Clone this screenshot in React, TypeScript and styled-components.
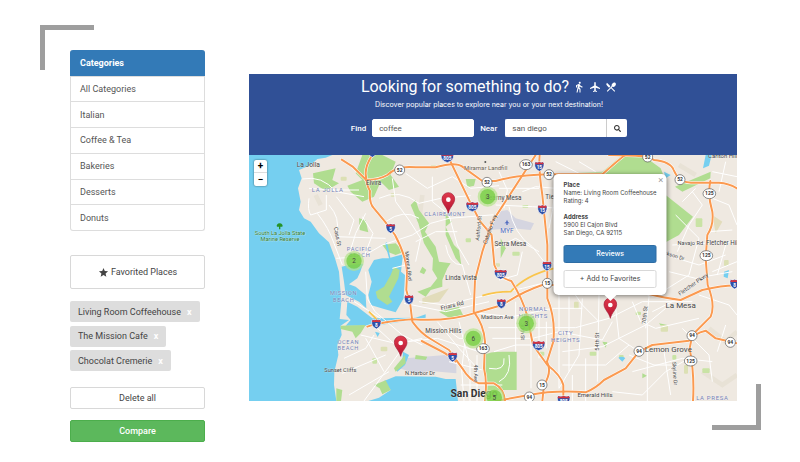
import React from "react";
import styled, { createGlobalStyle } from "styled-components";
import { MdDirectionsWalk, MdLocalAirport, MdLocalDining, MdStar } from "react-icons/md";
import { FaSearch } from "react-icons/fa";

const GlobalStyle = createGlobalStyle`
  *, *::before, *::after { box-sizing: border-box; }
  body { margin: 0; background: #fff; color: #444; font-family: Roboto, "Liberation Sans", sans-serif; font-size: 9px; }
  button, input { font: inherit; color: inherit; margin: 0; }
  h1, h2, p { margin: 0; }
`;

/* ---------- page frame ---------- */

const Frame = styled.div`
  position: relative;
  display: flex;
  align-items: flex-start;
  gap: 44px;
  margin: 25px 39px 20px 40px;
  padding: 25px 24px 0 30px;
`;

const Corner = styled.span<{ $end?: boolean }>`
  position: absolute;
  width: 54px;
  height: 45px;
  border: 0 solid #9e9e9e;
  ${(p) =>
    p.$end
      ? "right: 0; bottom: 12px; width: 49px; height: 46px; border-width: 0 5px 5px 0;"
      : "left: 0; top: 0; border-width: 5px 0 0 5px;"}
`;

const Sidebar = styled.aside`
  flex: 0 0 135px;
  display: flex;
  flex-direction: column;
`;

const Main = styled.main`
  flex: 1;
  min-width: 0;
  margin-top: 24px;
`;

/* ---------- sidebar ---------- */

const Categories = styled.nav`
  display: grid;
  grid-auto-rows: 1fr;
  min-height: 181px;
  margin-bottom: 24px;
  border: 1px solid #ddd;
  border-top: 0;
  border-radius: 3px;
`;

const CategoriesTitle = styled.h2`
  display: flex;
  align-items: center;
  margin: 0 -1px;
  padding: 0 10px;
  border-radius: 3px 3px 0 0;
  background: #337ab7;
  color: #fff;
  font-size: 9px;
  font-weight: 700;
`;

const Category = styled.a`
  display: flex;
  align-items: center;
  padding: 0 9px;
  border-top: 1px solid #ddd;
  color: #555;
  text-decoration: none;
`;

const SideButton = styled.button<{ $tone?: "green"; $tall?: boolean }>`
  display: flex;
  align-items: center;
  justify-content: center;
  gap: 2px;
  height: ${(p) => (p.$tall ? 34 : 22)}px;
  padding: 0;
  border: 1px solid ${(p) => (p.$tone ? "#4cae4c" : "#d8d8d8")};
  border-radius: 2px;
  background: ${(p) => (p.$tone ? "#5cb85c" : "#fff")};
  color: ${(p) => (p.$tone ? "#fff" : "#444")};
  font-weight: ${(p) => (p.$tone ? 500 : 400)};
`;

const Chips = styled.ul`
  display: flex;
  flex-direction: column;
  align-items: flex-start;
  justify-content: space-between;
  min-height: 70px;
  margin: 12px 0 16px;
  padding: 0;
  list-style: none;
`;

const Chip = styled.li`
  display: flex;
  align-items: center;
  height: 21px;
  padding: 0 8px;
  gap: 6px;
  border-radius: 2px;
  background: #ddd;
  color: #444;
`;

const ChipClose = styled.button`
  padding: 0;
  border: 0;
  background: none;
  color: #fff;
  font-weight: 700;
`;

const Actions = styled.div`
  display: grid;
  gap: 11px;
`;

/* ---------- banner ---------- */

const Banner = styled.header`
  display: flex;
  flex-direction: column;
  align-items: center;
  min-height: 81px;
  padding: 3px 8px 0 0;
  background: #305096;
  color: #fff;
`;

const Title = styled.h1`
  display: flex;
  align-items: center;
  gap: 4px;
  font-size: 16px;
  font-weight: 400;
  line-height: 20px;
`;

const Tagline = styled.p`
  margin-top: 3px;
  font-family: Inter, Roboto, sans-serif;
  font-size: 7px;
  line-height: 10px;
`;

const SearchForm = styled.form`
  display: flex;
  align-items: center;
  margin-top: 9px;
`;

const Label = styled.label`
  margin-right: 6px;
  font-size: 8px;
  font-weight: 500;
`;

const Field = styled.input<{ $joined?: boolean }>`
  width: 102px;
  height: 18px;
  padding: 0 6px;
  border: 1px solid #fff;
  border-right-color: ${(p) => (p.$joined ? "#ccc" : "#fff")};
  border-radius: ${(p) => (p.$joined ? "2px 0 0 2px" : "2px")};
  background: #fff;
  color: #555;
  font-size: 8px;
  margin-left: ${(p) => (p.$joined ? 2 : 0)}px;
  margin-right: ${(p) => (p.$joined ? 0 : 6)}px;
`;

const SearchButton = styled.button`
  display: grid;
  place-items: center;
  width: 20px;
  height: 18px;
  padding: 0;
  border: 0;
  border-radius: 0 2px 2px 0;
  background: #fff;
  color: #333;
`;

/* ---------- map ---------- */

const MapArea = styled.section`
  position: relative;
  overflow: hidden;
`;

const MapDrawing = styled.svg`
  display: block;
  width: 100%;
  height: auto;
  font-family: Roboto, "Liberation Sans", sans-serif;
`;

const MapText = styled.text<{ $size?: number; $fill?: string; $wide?: boolean; $bold?: boolean }>`
  font-size: ${(p) => p.$size ?? 20}px;
  font-weight: ${(p) => (p.$bold ? 700 : 400)};
  fill: ${(p) => p.$fill ?? "#444"};
  letter-spacing: ${(p) => (p.$wide ? 2 : 0)}px;
  text-anchor: middle;
  paint-order: stroke;
  stroke: rgba(255, 255, 255, 0.5);
  stroke-width: 2px;
`;

const ZoomControl = styled.div`
  position: absolute;
  left: 5px;
  top: 5px;
  display: grid;
  border-radius: 2px;
  background: #fff;
  box-shadow: 0 0 2px rgba(0, 0, 0, 0.6);
`;

const ZoomButton = styled.button`
  width: 13px;
  height: 13px;
  padding: 0;
  border: 0;
  border-bottom: 1px solid #ddd;
  background: none;
  color: #000;
  font-size: 10px;
  font-weight: 700;
  line-height: 12px;
  &:last-child { border-bottom: 0; }
`;

const Popup = styled.article`
  position: absolute;
  left: 74%;
  bottom: 43%;
  transform: translateX(-50%);
  width: 113px;
  padding: 7px 10px;
  border-radius: 5px;
  background: #fff;
  color: #444;
  box-shadow: 0 1px 5px rgba(0, 0, 0, 0.5);
  font-family: Inter, "Liberation Sans", sans-serif;
  font-size: 6px;
  line-height: 8px;
  white-space: nowrap;
  &::after {
    content: "";
    position: absolute;
    left: 50%;
    top: 100%;
    margin-left: -6px;
    border: 6px solid transparent;
    border-top-color: #fff;
    border-bottom: 0;
  }
`;

const PopupClose = styled.button`
  position: absolute;
  right: 3px;
  top: 1px;
  padding: 0;
  border: 0;
  background: none;
  color: #999;
  font-size: 9px;
  line-height: 9px;
`;

const Paragraph = styled.p`
  margin-bottom: 8px;
`;

const PopupButton = styled.button<{ $primary?: boolean }>`
  display: block;
  width: 100%;
  height: 18px;
  margin-bottom: ${(p) => (p.$primary ? 7 : 0)}px;
  padding: 0;
  border: 1px solid ${(p) => (p.$primary ? "#2e6da4" : "#d8d8d8")};
  border-radius: 2px;
  background: ${(p) => (p.$primary ? "#337ab7" : "#fff")};
  color: ${(p) => (p.$primary ? "#fff" : "#444")};
  font-size: 7px;
  font-weight: ${(p) => (p.$primary ? 500 : 400)};
`;

const categories = ["All Categories", "Italian", "Coffee & Tea", "Bakeries", "Desserts", "Donuts"];
const favorites = ["Living Room Coffeehouse", "The Mission Cafe", "Chocolat Cremerie"];

const BLUE = "#7180b5";
const GREEN = "#2c7a2a";

type LabelSpec = { t: string; x: number; y: number; s?: number; f?: string; w?: boolean; b?: boolean; r?: number };

const labels: LabelSpec[] = [
  { t: "La Jolla", x: 178, y: 37 },
  { t: "LA JOLLA", x: 236, y: 110, s: 18, f: BLUE, w: true },
  { t: "Elvira", x: 374, y: 91, s: 19 },
  { t: "South La Jolla State", x: 93, y: 240, s: 17, f: GREEN },
  { t: "Marine Reserve", x: 93, y: 259, s: 17, f: GREEN },
  { t: "Cass St", x: 260, y: 246, s: 17, r: 78 },
  { t: "PACIFIC", x: 331, y: 288, s: 17, f: BLUE, w: true },
  { t: "BEACH", x: 332, y: 307, s: 17, f: BLUE, w: true },
  { t: "MISSION", x: 284, y: 421, s: 17, f: BLUE, w: true },
  { t: "BEACH", x: 284, y: 441, s: 17, f: BLUE, w: true },
  { t: "OCEAN", x: 298, y: 567, s: 17, f: BLUE, w: true },
  { t: "BEACH", x: 298, y: 586, s: 17, f: BLUE, w: true },
  { t: "Sunset Cliffs", x: 274, y: 652, s: 17 },
  { t: "N.Harbor Dr", x: 513, y: 659, s: 17 },
  { t: "Morena Blvd", x: 473, y: 334, s: 16, r: 84 },
  { t: "CLAIREMONT", x: 588, y: 183, s: 17, f: BLUE, w: true },
  { t: "Linda Vista", x: 636, y: 374, s: 19 },
  { t: "Friars Rd", x: 611, y: 457, s: 18, r: -14 },
  { t: "Mission Hills", x: 583, y: 534, s: 19 },
  { t: "4th Ave", x: 675, y: 655, s: 16, r: 90 },
  { t: "San Diego", x: 675, y: 725, s: 31, f: "#333", b: true },
  { t: "Miramar Landfill", x: 710, y: 45, s: 18, f: "#6b6252" },
  { t: "Kearny Mesa", x: 763, y: 135, s: 19 },
  { t: "Tierrasanta", x: 937, y: 132, s: 19 },
  { t: "Ashford St", x: 694, y: 220, s: 16, r: -84 },
  { t: "Cabrillo Fwy", x: 728, y: 225, s: 17, r: -70 },
  { t: "MYF", x: 774, y: 234, s: 20, f: "#526cc0" },
  { t: "Serra Mesa", x: 784, y: 272, s: 19 },
  { t: "Madison Ave", x: 745, y: 492, s: 17 },
  { t: "NORMAL", x: 853, y: 469, s: 18, f: BLUE, w: true },
  { t: "HEIGHTS", x: 853, y: 488, s: 18, f: BLUE, w: true },
  { t: "30th St", x: 815, y: 530, s: 16, r: 88 },
  { t: "CITY", x: 950, y: 541, s: 18, f: BLUE, w: true },
  { t: "HEIGHTS", x: 950, y: 560, s: 18, f: BLUE, w: true },
  { t: "54th St", x: 1050, y: 560, s: 17, r: -90 },
  { t: "70th St", x: 1193, y: 481, s: 17, r: -84 },
  { t: "Emerald Hills", x: 1038, y: 725, s: 18 },
  { t: "Lemon Grove", x: 1258, y: 591, s: 24 },
  { t: "La Mesa", x: 1295, y: 458, s: 24 },
  { t: "Skyline Dr", x: 1272, y: 656, s: 16, r: 86 },
  { t: "LA PRESA", x: 1390, y: 736, s: 18, f: BLUE, w: true },
  { t: "Navajo Rd", x: 1324, y: 269, s: 17 },
  { t: "Fletcher Hills", x: 1426, y: 269, s: 19 },
  { t: "Jackson Dr", x: 1266, y: 305, s: 16, r: 17 },
  { t: "Fletcher Pkwy", x: 1336, y: 392, s: 17, r: -35 },
  { t: "Carlton Hills", x: 1426, y: 8, s: 18 },
];

const freeways = [
  "M278 14 L310 34 L352 75",
  "M370 0 Q350 30 350 55 Q352 90 363 108 Q360 145 375 160 L408 200 L438 240 Q475 310 474 360 L472 405 L484 450 L490 500 Q515 535 545 552 L600 585 L640 640 Q660 675 690 685 H735 Q765 700 768 738",
  "M350 75 Q390 75 415 60 Q445 30 500 37 H560 Q620 20 640 35 L700 78 H740 Q800 60 900 58 H1060 Q1125 0 1130 0",
  "M1080 0 L1160 2 Q1200 3 1215 15 Q1265 20 1274 45 Q1290 85 1330 83 H1410 Q1440 85 1464 100",
  "M595 0 L665 145 L694 200 L728 240 L736 330 Q750 370 787 378 Q820 430 834 480 L852 570 L895 630 Q935 660 943 690 V738",
  "M860 0 L730 200 L700 290 L678 375 L674 470 Q705 510 708 560 L705 640 Q715 680 708 738",
  "M872 0 Q868 40 880 120 L895 270 L895 430 Q920 490 913 560 L894 620 Q910 650 885 690 L880 738",
  "M355 515 Q400 500 490 493 Q600 500 674 475 L760 450 Q820 410 880 390 H940 M1190 415 Q1250 430 1295 435 L1360 405 Q1430 390 1464 392",
  "M518 558 L570 585 Q600 600 620 620",
  "M740 738 L840 720 Q920 705 1010 712 Q1040 700 1065 675 L1130 640 L1170 590 L1210 570 L1320 557 Q1335 535 1370 527 L1400 550 L1464 565",
  "M1384 78 Q1375 120 1390 170 Q1395 210 1375 240 L1370 310 L1376 390 Q1400 450 1385 485 L1330 540 L1322 580 Q1337 660 1332 738",
];

const streets =
  "M160 72 Q220 60 260 110 L345 125 M180 100 L250 105 H330 M180 130 Q175 165 185 180 L232 165 V120 M205 175 Q240 220 255 265 L280 330 M240 150 Q275 190 262 230 M262 125 L315 195 L300 240 M262 310 L340 305 L400 270 L490 240 L545 205 L600 190 L750 178 M350 175 L320 235 L300 300 M340 185 L372 235 L345 305 M260 245 L410 250 M390 130 Q450 100 510 145 L575 130 L665 122 M430 70 L440 140 L480 195 L515 250 L500 320 M410 200 Q465 160 510 190 M470 55 L535 100 L610 65 L665 100 L750 92 M550 65 V140 L600 180 L625 270 L660 330 M500 260 L560 230 L625 230 M590 270 Q600 330 640 330 L665 420 M430 340 L470 330 M510 440 L590 450 L670 430 L820 400 L960 365 M465 445 L590 470 L720 440 M565 500 L630 580 L690 645 M350 350 L355 430 L378 470 L460 540 L520 570 M300 430 L395 490 M374 510 L455 585 M335 540 L460 570 M350 550 L405 650 M285 610 L350 580 L375 540 M280 655 L410 600 M300 720 L420 650 M345 738 L475 560 L520 550 M475 560 L565 550 L690 590 M590 520 L630 550 H700 M630 500 L660 620 M600 620 L700 645 M650 540 L638 645 L645 738 M663 620 V738 M684 600 V738 M635 690 H760 M635 715 H760 M740 150 L850 155 L940 160 M750 100 H870 M750 50 L775 105 L765 160 M820 110 L860 95 L920 100 M780 155 Q795 240 850 275 L885 320 M740 280 L800 250 L870 290 M820 290 L805 360 L750 375 M920 90 L910 170 L900 220 M910 320 L1000 450 L1050 500 M718 518 H980 L1080 490 L1180 440 H1330 M730 550 H850 L930 530 L1060 555 L1090 500 M690 475 L790 485 L910 460 L1000 460 M800 440 V590 M846 500 V700 M870 480 V610 M892 500 V580 M930 410 V700 M960 425 V650 M1000 430 L990 600 L930 700 M1050 420 L1045 680 M735 590 L800 570 H890 M720 640 Q770 650 765 610 M780 600 Q790 660 750 680 M940 590 L1060 575 L1190 510 L1250 460 M940 630 H1070 L1140 570 M970 660 V738 M1010 610 V738 M1100 460 L1110 550 L1170 590 M1150 440 L1175 500 L1220 520 L1350 490 M1205 380 L1190 520 M1210 470 L1290 430 M1195 510 V738 M1150 650 L1300 610 L1390 620 M1090 710 L1180 720 L1250 650 L1320 610 M1245 590 L1265 720 M1140 600 L1215 630 H1280 M1300 520 L1380 600 L1390 680 M1430 510 L1405 590 M1350 420 L1440 450 L1464 480 M1280 180 L1350 250 L1320 360 L1240 410 M1250 300 L1350 330 L1430 300 M1260 350 L1340 370 L1450 350 M1270 270 L1360 265 L1464 260 M1330 110 L1360 150 L1320 210 L1285 290 M1390 130 L1440 150 L1464 210 M1380 230 L1450 225 M1390 50 L1464 65 M1430 20 L1410 110 M1340 100 L1300 140 M1390 350 L1464 320 M1430 270 L1405 360 M990 20 L1040 50 M920 20 L1000 60";

const inlandGreens = [
  "M192 55 L260 40 L250 75 L270 85 L230 108 L195 85Z",
  "M340 0 H400 L440 20 L425 60 L450 95 L420 105 L395 80 L375 125 L340 140 L305 110 L295 92 L340 75 L320 55Z",
  "M330 190 L350 195 L358 232 L332 225Z",
  "M400 270 L440 265 L465 290 L440 300 L415 290Z",
  "M485 150 L500 135 L510 165 L540 205 L528 230 L560 275 L570 320 L605 325 L595 340 L580 375 L580 395 L545 405 L530 425 L505 410 L545 395 L565 370 L550 345 L552 310 L525 265 L508 205Z",
  "M590 175 L608 200 L590 215 L615 270 L630 285 L637 330 L620 310 L590 240Z",
  "M650 72 H680 L675 92 L655 97Z",
  "M570 470 L630 455 L642 480 L600 488Z",
  "M705 600 Q720 590 760 590 H803 V705 H710Z",
  "M960 55 L1060 50 L1120 0 H1180 L1235 40 L1245 65 L1205 90Z",
  "M1250 120 L1332 185 L1290 240 L1250 262Z",
  "M520 335 L532 345 L525 358 L512 352Z",
  "M1278 95 L1385 50 L1384 70 L1300 110Z",
  "M1230 505 L1255 510 L1245 525Z",
  "M1060 560 L1075 562 L1070 578Z",
  "M930 335 L945 350 L935 370Z",
  "M262 700 L280 705 L276 738 H262Z",
  "M755 250 L770 280 L755 310Z",
  "M1180 655 L1194 662 L1180 670Z",
];

const shoreGreens = [
  "M435 335 L452 345 L448 370 L420 425 L430 440 L415 450 L385 430 L380 410 L405 395 L425 360Z",
  "M275 512 L350 510 L335 535 L320 550 L310 530 L275 522Z",
  "M468 600 L470 625 L440 650 L435 640Z",
  "M500 600 L535 605 L530 615 L498 612Z",
  "M375 690 L410 676 L425 705 L400 718 L392 700Z",
];

const patches: [number, number, number, number][] = [
  [275, 65, 18, 12], [425, 115, 14, 10], [545, 30, 16, 12], [820, 150, 18, 8], [790, 290, 22, 12],
  [975, 440, 14, 22], [1022, 590, 20, 12], [1235, 510, 22, 20], [1340, 190, 20, 26], [1425, 315, 14, 18],
  [1305, 630, 12, 26], [395, 575, 20, 14], [370, 610, 14, 16], [650, 250, 16, 12], [735, 325, 18, 10],
  [1110, 600, 14, 10], [1270, 600, 12, 14], [870, 590, 16, 12], [1360, 640, 22, 14], [1160, 470, 16, 10],
];

function Shield({ x, y, n }: { x: number; y: number; n: string }) {
  const h = n.length > 2 ? 19 : 14;
  return (
    <g transform={`translate(${x} ${y})`}>
      <path
        d={`M${-h} -9 L${-h + 3} -14 Q${-h / 2} -10 0 -14 Q${h / 2} -10 ${h - 3} -14 L${h} -9 Q${h + 2} 8 0 15 Q${-h - 2} 8 ${-h} -9Z`}
        fill="#2f50a8"
        stroke="#fff"
        strokeWidth="2"
      />
      <path
        d={`M${-h + 1} -6 L${-h + 3} -13 Q${-h / 2} -9 0 -13 Q${h / 2} -9 ${h - 3} -13 L${h - 1} -6Z`}
        fill="#d8343f"
      />
      <text y="8" textAnchor="middle" fontSize="14" fontWeight="700" fill="#fff">{n}</text>
    </g>
  );
}

function Route({ x, y, n }: { x: number; y: number; n: string }) {
  return (
    <g transform={`translate(${x} ${y})`}>
      <ellipse rx={n.length > 2 ? 19 : 15} ry="15" fill="#fff" stroke="#555" strokeWidth="2" />
      <text y="5" textAnchor="middle" fontSize="15" fontWeight="700" fill="#333">{n}</text>
    </g>
  );
}

function Pin({ x, y }: { x: number; y: number }) {
  return (
    <g transform={`translate(${x} ${y})`}>
      <path d="M0 0 C-4 -18 -19 -27 -19 -42 A19 19 0 0 1 19 -42 C19 -27 4 -18 0 0Z" fill="url(#pinRed)" stroke="#a51c38" strokeWidth="2" />
      <circle cy="-40" r="7" fill="#fff" />
    </g>
  );
}

function Cluster({ x, y, n }: { x: number; y: number; n: number }) {
  return (
    <g transform={`translate(${x} ${y})`}>
      <circle r="30" fill="#b5e28c" fillOpacity="0.7" />
      <circle r="23" fill="#6ecc39" fillOpacity="0.7" />
      <text y="7" textAnchor="middle" fontSize="19" fill="#444">{n}</text>
    </g>
  );
}

function CityMap() {
  return (
    <MapDrawing viewBox="0 0 1464 738" role="img" aria-label="Map of San Diego">
      <defs>
        <linearGradient id="pinRed" x1="0" y1="0" x2="0" y2="1">
          <stop offset="0" stopColor="#df3a4c" />
          <stop offset="1" stopColor="#b5122f" />
        </linearGradient>
      </defs>
      <rect width="1464" height="738" fill="#75cff0" />
      <path
        d="M250 0 L230 8 L205 12 L185 30 L150 45 L158 70 L147 100 L155 140 L150 165 L165 190 L185 200 L210 235 L240 262 L258 310 L270 350 L277 440 L272 492 L300 495 L275 512 L278 540 L265 570 L268 600 L256 650 L255 690 L262 738 H1464 V0Z"
        fill="#efe9e1"
      />
      <path d="M930 180 L1010 420 M1380 520 L1430 560 L1464 530 M1360 650 L1420 690 L1464 660 M200 120 L215 150 M1290 30 L1340 60 M520 120 L510 200" stroke="#e8e2d6" strokeWidth="14" fill="none" />
      <path d="M520 430 L600 400 L570 440 L520 447Z M1060 660 L1080 690 M1390 180 L1420 200 L1400 235Z" fill="#e2dcbb" />
      <path d="M745 170 L775 165 L800 190 L855 205 L845 225 L790 220 L720 225Z M470 610 L590 600 L622 620 L622 655 L545 648 L500 655 L450 640Z" fill="#d5d5e0" />
      <g fill="#b0dd90">
        {inlandGreens.map((d) => <path key={d} d={d} />)}
      </g>
      {patches.map(([x, y, w, h]) => (
        <rect key={`${x}-${y}`} x={x} y={y} width={w} height={h} rx="3" fill={x % 2 ? "#dce0b4" : "#c9e3a5"} />
      ))}
      <g fill="#75cff0">
        <path d="M278 335 L300 330 L342 326 L334 350 L325 370 L300 388 L320 395 L350 420 L352 460 L330 440 L290 420 L285 380Z" />
        <path d="M295 440 L325 455 L370 490 L500 488 L530 478 L530 488 L380 512 L290 512 L305 495 L292 480Z" />
        <path d="M375 315 L400 310 L420 310 L408 265 L414 262 L424 308 L462 298 L456 350 L468 360 L464 430 L440 472 L405 462 L365 450 L358 420 L368 380 L358 345Z" />
        <path d="M462 590 L480 600 L468 630 L445 650 L438 638 L460 620Z M405 678 L440 664 L560 665 L590 672 L620 672 L627 738 H358 L390 728 L425 705Z M378 530 L392 534 L386 546Z" />
        <path d="M1245 50 L1265 60 L1250 70Z M1425 350 L1440 345 L1436 370 L1424 365Z M1108 608 Q1118 602 1129 609 L1120 620Z M1370 0 H1388 L1380 32 L1362 40Z" />
      </g>
      <g fill="#b0dd90">
        {shoreGreens.map((d) => <path key={d} d={d} />)}
      </g>
      <path d={streets} fill="none" stroke="#fff" strokeWidth="3" strokeLinejoin="round" />
      <path d="M360 470 L395 505 M700 422 Q740 410 785 410 Q830 360 915 340" fill="none" stroke="#fac54b" strokeWidth="5" />
      <g fill="none" strokeLinejoin="round" strokeLinecap="round">
        {freeways.map((d) => <path key={d} d={d} stroke="#fff" strokeWidth="9" />)}
        {freeways.map((d) => <path key={d} d={d} stroke="#fb9a50" strokeWidth="6" />)}
      </g>
      {labels.map((l) => (
        <MapText
          key={`${l.t}-${l.y}-${l.x}`}
          x={l.x}
          y={l.y}
          $size={l.s}
          $fill={l.f}
          $wide={l.w}
          $bold={l.b}
          transform={l.r ? `rotate(${l.r} ${l.x} ${l.y})` : undefined}
        >
          {l.t}
        </MapText>
      ))}
      <path d="M92 205 a9 7 0 0 1 8 10 h-6 v8 h-4 v-8 h-6 a9 7 0 0 1 8 -10Z" fill="#259326" />
      <path d="M774 194 l3 7 5 4 h-6 v5 h-4 v-5 h-6 l5 -4Z" fill="#526cc0" />
      <circle cx="709" cy="21" r="3" fill="#555" />
      <Shield x={425} y={220} n="5" />
      <Shield x={480} y={434} n="5" />
      <Shield x={382} y={507} n="8" />
      <Shield x={611} y={606} n="5" />
      <Shield x={595} y={8} n="805" />
      <Shield x={670} y={155} n="805" />
      <Shield x={755} y={358} n="805" />
      <Shield x={869} y={572} n="805" />
      <Shield x={944} y={736} n="805" />
      <Shield x={871} y={34} n="15" />
      <Shield x={880} y={164} n="15" />
      <Shield x={894} y={333} n="15" />
      <Shield x={757} y={446} n="8" />
      <Shield x={1457} y={387} n="8" />
      <Shield x={370} y={-8} n="5" />
      <Route x={452} y={45} n="52" />
      <Route x={714} y={82} n="52" />
      <Route x={900} y={59} n="52" />
      <Route x={1196} y={6} n="52" />
      <Route x={1293} y={74} n="52" />
      <Route x={831} y={29} n="163" />
      <Route x={702} y={581} n="163" />
      <Route x={895} y={385} n="15" />
      <Route x={879} y={690} n="15" />
      <Route x={841} y={726} n="94" />
      <Route x={1170} y={589} n="94" />
      <Route x={1329} y={542} n="94" />
      <Route x={1444} y={562} n="94" />
      <Route x={1381} y={116} n="125" />
      <Route x={1372} y={302} n="125" />
      <Route x={1325} y={618} n="125" />
      <Cluster x={315} y={318} n={2} />
      <Cluster x={716} y={125} n={3} />
      <Cluster x={673} y={550} n={6} />
      <Cluster x={832} y={505} n={3} />
      <Cluster x={736} y={727} n={5} />
      <Pin x={598} y={174} />
      <Pin x={455} y={604} />
      <Pin x={1084} y={490} />
    </MapDrawing>
  );
}

export default function App() {
  return (
    <>
      <GlobalStyle />
      <Frame>
        <Corner />
        <Corner $end />
        <Sidebar>
          <Categories aria-label="Categories">
            <CategoriesTitle>Categories</CategoriesTitle>
            {categories.map((c) => (
              <Category key={c} href="#">{c}</Category>
            ))}
          </Categories>
          <SideButton type="button" $tall>
            <MdStar size={11} />
            Favorited Places
          </SideButton>
          <Chips>
            {favorites.map((f) => (
              <Chip key={f}>
                {f}
                <ChipClose type="button" aria-label={`Remove ${f}`}>x</ChipClose>
              </Chip>
            ))}
          </Chips>
          <Actions>
            <SideButton type="button">Delete all</SideButton>
            <SideButton type="button" $tone="green">Compare</SideButton>
          </Actions>
        </Sidebar>
        <Main>
          <Banner>
            <Title>
              Looking for something to do?
              <MdDirectionsWalk size={12} />
              <MdLocalAirport size={12} />
              <MdLocalDining size={12} />
            </Title>
            <Tagline>Discover popular places to explore near you or your next destination!</Tagline>
            <SearchForm onSubmit={(e) => e.preventDefault()}>
              <Label htmlFor="find">Find</Label>
              <Field id="find" defaultValue="coffee" />
              <Label htmlFor="near">Near</Label>
              <Field id="near" defaultValue="san diego" $joined />
              <SearchButton type="submit" aria-label="Search">
                <FaSearch size={7} />
              </SearchButton>
            </SearchForm>
          </Banner>
          <MapArea>
            <CityMap />
            <ZoomControl>
              <ZoomButton type="button" aria-label="Zoom in">+</ZoomButton>
              <ZoomButton type="button" aria-label="Zoom out">−</ZoomButton>
            </ZoomControl>
            <Popup>
              <PopupClose type="button" aria-label="Close">×</PopupClose>
              <Paragraph>
                <strong>Place</strong><br />
                Name: Living Room Coffeehouse<br />
                Rating: 4
              </Paragraph>
              <Paragraph>
                <strong>Address</strong><br />
                5900 El Cajon Blvd<br />
                San Diego, CA 92115
              </Paragraph>
              <PopupButton type="button" $primary>Reviews</PopupButton>
              <PopupButton type="button">+ Add to Favorites</PopupButton>
            </Popup>
          </MapArea>
        </Main>
      </Frame>
    </>
  );
}
